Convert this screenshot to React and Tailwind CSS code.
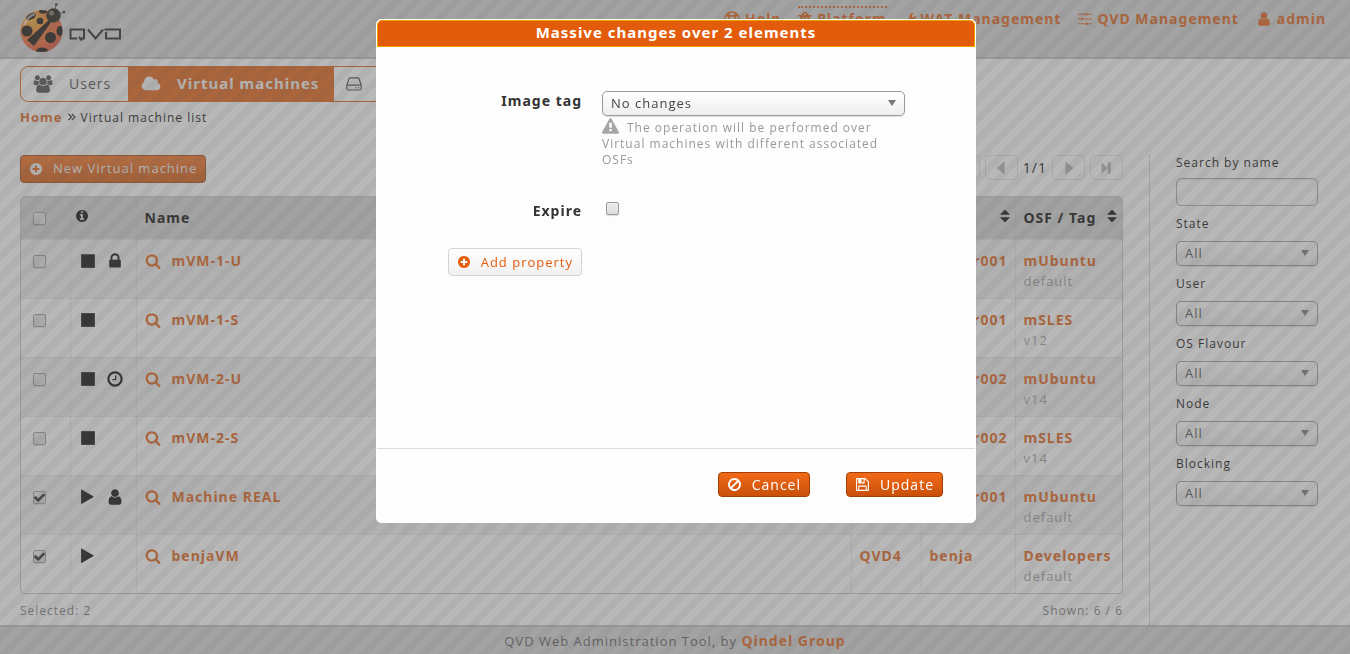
import { FaWrench, FaRegLifeRing } from "react-icons/fa";

const CIRCLE =
  "M1664 896q0 209-103 385.5t-279.5 279.5-385.5 103-385.5-103-279.5-279.5-103-385.5 103-385.5 279.5-279.5 385.5-103 385.5 103 279.5 279.5 103 385.5z";

const PATHS = {
  search:
    "M1216 832q0-185-131.5-316.5t-316.5-131.5-316.5 131.5-131.5 316.5 131.5 316.5 316.5 131.5 316.5-131.5 131.5-316.5zm512 832q0 52-38 90t-90 38q-54 0-90-38l-343-342q-179 124-399 124-143 0-273.5-55.5t-225-150-150-225-55.5-273.5 55.5-273.5 150-225 225-150 273.5-55.5 273.5 55.5 225 150 150 225 55.5 273.5q0 220-124 399l343 343q37 37 37 90z",
  user: "M1536 1399q0 109-62.5 187t-150.5 78h-854q-88 0-150.5-78t-62.5-187q0-85 8.5-160.5t31.5-152 58.5-131 94-89 134.5-34.5q131 128 313 128t313-128q76 0 134.5 34.5t94 89 58.5 131 31.5 152 8.5 160.5zm-256-887q0 159-112.5 271.5t-271.5 112.5-271.5-112.5-112.5-271.5 112.5-271.5 271.5-112.5 271.5 112.5 112.5 271.5z",
  plus:
    "M1344 960v-128q0-26-19-45t-45-19h-256v-256q0-26-19-45t-45-19h-128q-26 0-45 19t-19 45v256h-256q-26 0-45 19t-19 45v128q0 26 19 45t45 19h256v256q0 26 19 45t45 19h128q26 0 45-19t19-45v-256h256q26 0 45-19t19-45z" + CIRCLE,
  floppy:
    "M512 1536h768v-384h-768v384zm896 0h128v-896q0-14-10-38.5t-20-34.5l-281-281q-10-10-34-20t-39-10v416q0 40-28 68t-68 28h-576q-40 0-68-28t-28-68v-416h-128v1280h128v-416q0-40 28-68t68-28h832q40 0 68 28t28 68v416zm-384-928v-320q0-13-9.5-22.5t-22.5-9.5h-192q-13 0-22.5 9.5t-9.5 22.5v320q0 13 9.5 22.5t22.5 9.5h192q13 0 22.5-9.5t9.5-22.5zm640 32v928q0 40-28 68t-68 28h-1344q-40 0-68-28t-28-68v-1344q0-40 28-68t68-28h928q40 0 88 20t76 48l280 280q28 28 48 76t20 88z",
  ban: "M1440 893q0-161-87-295l-754 753q137 89 297 89 111 0 211.5-43.5t173.5-116.5 116-174.5 43-212.5zm-999 299l755-754q-135-91-300-91-148 0-273 73t-198 199-73 274q0 162 89 299zm1223-299q0 157-61 300t-163.5 246-245 164-298.5 61-298.5-61-245-164-163.5-246-61-300 61-299.5 163.5-245.5 245-164 298.5-61 298.5 61 245 164 163.5 245.5 61 299.5z",
  clock:
    "M1024 544v448q0 14-9 23t-23 9h-320q-14 0-23-9t-9-23v-64q0-14 9-23t23-9h224v-352q0-14 9-23t23-9h64q14 0 23 9t9 23zm416 352q0-148-73-273t-198-198-273-73-273 73-198 198-73 273 73 273 198 198 273 73 273-73 198-198 73-273z" + CIRCLE,
  lock: "M640 768h512v-192q0-106-75-181t-181-75-181 75-75 181v192zm832 96v576q0 40-28 68t-68 28h-960q-40 0-68-28t-28-68v-576q0-40 28-68t68-28h32v-192q0-184 132-316t316-132 316 132 132 316v192h32q40 0 68 28t28 68z",
  info: "M1152 1376v-160q0-14-9-23t-23-9h-96v-512q0-14-9-23t-23-9h-320q-14 0-23 9t-9 23v160q0 14 9 23t23 9h96v320h-96q-14 0-23 9t-9 23v160q0 14 9 23t23 9h448q14 0 23-9t9-23zm-128-896v-160q0-14-9-23t-23-9h-192q-14 0-23 9t-9 23v160q0 14 9 23t23 9h192q14 0 23-9t9-23z" + CIRCLE,
  sort: "M1408 1088q0 26-19 45l-448 448q-19 19-45 19t-45-19l-448-448q-19-19-19-45t19-45 45-19h896q26 0 45 19t19 45zm0-384q0 26-19 45t-45 19h-896q-26 0-45-19t-19-45 19-45l448-448q19-19 45-19t45 19l448 448q19 19 19 45z",
  warning:
    "M1024 1375v-190q0-14-9.5-23.5t-22.5-9.5h-192q-13 0-22.5 9.5t-9.5 23.5v190q0 14 9.5 23.5t22.5 9.5h192q13 0 22.5-9.5t9.5-23.5zm-2-374l18-459q0-12-10-19-13-11-24-11h-220q-11 0-24 11-10 7-10 21l17 457q0 10 10 16.5t24 6.5h185q14 0 23.5-6.5t10.5-16.5zm-14-934l768 1408q35 63-2 126-17 29-46.5 46t-63.5 17h-1536q-34 0-63.5-17t-46.5-46q-37-63-2-126l768-1408q17-31 47-49t65-18 65 18 47 49z",
  play: "M128 32l1400 800q30 32 0 64l-1400 800z",
  stop: "M128 128h1536v1536h-1536z",
  prev: "M1300 128v1536l-900-768z",
  next: "M492 128v1536l900-768z",
  last: "M300 256v1280l680-640zM980 256h340v1280h-340z",
  sliders:
    "M0 224h900v128h-900zM1250 224h542v128h-542zM950 120h256v336h-256zM0 832h350v128h-350zM700 832h1092v128h-1092zM400 728h256v336h-256zM0 1440h1000v128h-1000zM1350 1440h442v128h-442zM1050 1336h256v336h-256z",
  check: "M1671 566q0 40-28 68l-860 860q-28 28-68 28t-68-28l-498-498q-28-28-28-68t28-68l136-136q28-28 68-28t68 28l294 295 656-657q28-28 68-28t68 28l136 136q28 28 28 68z",
  angles: "M250 350l550 550-550 550M850 350l550 550-550 550",
};

function Icon({ name, className }) {
  return (
    <svg viewBox="0 0 1792 1792" className={className} fill="currentColor" fillRule="evenodd" aria-hidden="true">
      <path d={PATHS[name]} />
    </svg>
  );
}

function AnglesIcon({ className }) {
  return (
    <svg viewBox="0 0 1792 1792" className={className} fill="none" stroke="currentColor" strokeWidth="200" aria-hidden="true">
      <path d={PATHS.angles} />
    </svg>
  );
}

function UsersIcon({ className }) {
  return (
    <svg viewBox="0 0 2048 1792" className={className} fill="currentColor" aria-hidden="true">
      <path d="M657 896q-162 5-265 128h-134q-82 0-138-40.5t-56-118.5q0-353 124-353 6 0 43.5 21t97.5 42.5 119 21.5q67 0 133-23-5 37-5 66 0 159 90 293zm1071 637q0 120-73 189.5t-194 69.5h-874q-121 0-194-69.5t-73-189.5q0-53 3.500-103.500t14-109 26.500-108.500 43-97.500 62-81 85.500-53.500 111.500-20q10 0 43 21.500t73 48 107 48 135 21.500 135-21.500 107-48 73-48 43-21.500q61 0 111.500 20t85.500 53.500 62 81 43 97.500 26.500 108.500 14 109 3.500 103.500zm-1024-1277q0 106-75 181t-181 75-181-75-75-181 75-181 181-75 181 75 75 181zm704 384q0 159-112.500 271.500t-271.500 112.500-271.500-112.500-112.500-271.500 112.500-271.500 271.500-112.500 271.500 112.500 112.500 271.500zm576 225q0 78-56 118.500t-138 40.500h-134q-103-123-265-128 90-134 90-293 0-29-5-66 66 23 133 23 59 0 119-21.500t97.500-42.500 43.500-21q124 0 124 353zm-128-609q0 106-75 181t-181 75-181-75-75-181 75-181 181-75 181 75 75 181z" />
    </svg>
  );
}

function CloudIcon({ className }) {
  return (
    <svg viewBox="0 0 2048 1792" className={className} fill="currentColor" aria-hidden="true">
      <path d="M1984 1152q0 159-112.5 271.5t-271.5 112.5h-1088q-185 0-316.5-131.5t-131.5-316.5q0-132 71-241.5t187-163.5q-2-28-2-43 0-212 150-362t362-150q158 0 286.5 88t187.5 230q70-62 166-62 106 0 181 75t75 181q0 75-41 138 129 30 213 134.5t84 239.5z" />
    </svg>
  );
}

function HddIcon({ className }) {
  return (
    <svg viewBox="0 0 16 14" className={className} fill="none" stroke="currentColor" strokeWidth="1.2" aria-hidden="true">
      <path d="M.8 8.2 3 1.6Q3.3.8 4 .8h8q.7 0 1 .8l2.2 6.6v3.6q0 1.2-1.2 1.2H2q-1.200 0-1.200-1.200zM.8 8.200h14.400" />
      <path d="M9.500 10.700h1.200M12 10.700h1.200" strokeWidth="1.500" />
    </svg>
  );
}

function PlatformIcon({ className }) {
  return (
    <svg viewBox="0 0 14 14" className={className} fill="currentColor" fillRule="evenodd" aria-hidden="true">
      <path d="M5 0h4v1.500h1.500V3H14v1.500h-2.200L11 14H3L2.200 4.500H0V3h3.500V1.500H5zM6 1.500h2V3H6zM4.500 5.500l.5 7h1v-7zM8 5.500v7h1l.5-7z" />
    </svg>
  );
}

function Logo() {
  return (
    <svg viewBox="0 0 104 54" className="h-[54px] w-[104px]" role="img" aria-label="QVD">
      <defs>
        <radialGradient id="shell" cx="0.3" cy="0.25" r="0.9">
          <stop offset="0" stopColor="#f5b32a" />
          <stop offset="0.45" stopColor="#f0702a" />
          <stop offset="1" stopColor="#e0402c" />
        </radialGradient>
        <clipPath id="body">
          <circle cx="21.500" cy="31" r="21" />
        </clipPath>
      </defs>
      <circle cx="21.500" cy="31" r="21" fill="url(#shell)" />
      <g clipPath="url(#body)" fill="#120a06">
        <path d="m29 20-22 20 7 6 18-25z" />
        <circle cx="7" cy="31" r="5.500" />
        <circle cx="20" cy="21" r="3.300" />
        <ellipse cx="11" cy="16.500" rx="5.500" ry="3" transform="rotate(-30 11 16.500)" />
        <ellipse cx="23" cy="11.500" rx="4" ry="2" />
        <circle cx="30.500" cy="37.500" r="5.500" />
        <ellipse cx="40" cy="31" rx="3.500" ry="5" />
        <ellipse cx="22" cy="51" rx="6" ry="3.500" />
      </g>
      <path d="M4 25Q8 16 15 14" stroke="#fff" strokeOpacity=".55" strokeWidth="2.500" fill="none" />
      <circle cx="33.500" cy="15.500" r="7.200" fill="#1a120c" />
      <circle cx="31.500" cy="13" r="2.500" fill="#7a6a58" />
      <path d="m35 9 1.200-4.500M40 13.500l4-1.500" stroke="#1a120c" strokeWidth=".7" />
      <circle cx="36.300" cy="4.500" r="1.200" fill="#1a120c" />
      <circle cx="44" cy="12" r="1.200" fill="#1a120c" />
      <g fill="none" stroke="#1c1c1c" strokeWidth="2">
        <path d="M57 38.500h-6.500V29.500H64v9h-3M59 37l3 3.500" />
        <path d="m68 29.500 7.500 9 7.500-9" />
        <path d="M86 32v6.500h14v-9H84.500" />
      </g>
    </svg>
  );
}

function CheckBox({ label, defaultChecked, id }) {
  return (
    <span className="relative inline-flex size-[13px] align-middle">
      <input
        id={id}
        type="checkbox"
        aria-label={label}
        defaultChecked={defaultChecked}
        className="peer size-[13px] appearance-none rounded-xs border border-[#999] bg-linear-to-b from-[#ededed] to-[#dcdcdc] shadow-[0_1px_1px_rgba(0,0,0,0.12)]"
      />
      <Icon name="check" className="pointer-events-none absolute inset-0 hidden size-[13px] text-[#222] peer-checked:block" />
    </span>
  );
}

function SelectBox({ id, value }) {
  return (
    <div className="relative">
      <select
        id={id}
        className="h-[25px] w-full appearance-none rounded-[5px] border border-[#999] bg-linear-to-b from-white to-[#eee] pl-2 pr-6 text-[13px] text-[#444] shadow-[0_1px_1px_rgba(0,0,0,0.12)]"
      >
        <option>{value}</option>
      </select>
      <svg viewBox="0 0 8 6" className="pointer-events-none absolute right-[9px] top-[9px] h-[6px] w-2 fill-[#777]" aria-hidden="true">
        <path d="M0 0h8L4 6z" />
      </svg>
    </div>
  );
}

const NAV = [
  { label: "Help", icon: <FaRegLifeRing className="size-4" /> },
  { label: "Platform", icon: <PlatformIcon className="size-3.5" />, active: true },
  { label: "WAT Management", icon: <FaWrench className="size-3" /> },
  { label: "QVD Management", icon: <Icon name="sliders" className="size-3.5" /> },
  { label: "admin", icon: <Icon name="user" className="size-4" /> },
];

const ROWS = [
  { name: "mVM-1-U", state: "stop", extra: "lock", user: "mUser001", osf: "mUbuntu", tag: "default" },
  { name: "mVM-1-S", state: "stop", user: "mUser001", osf: "mSLES", tag: "v12" },
  { name: "mVM-2-U", state: "stop", extra: "clock", user: "mUser002", osf: "mUbuntu", tag: "v14" },
  { name: "mVM-2-S", state: "stop", user: "mUser002", osf: "mSLES", tag: "v14" },
  { name: "Machine REAL", state: "play", extra: "user", user: "mUser001", osf: "mUbuntu", tag: "default", checked: true },
  { name: "benjaVM", state: "play", node: "QVD4", user: "benja", osf: "Developers", tag: "default", checked: true },
];

const FILTERS = ["State", "User", "OS Flavour", "Node", "Blocking"];

const BOLD = "font-['Noto_Sans',sans-serif] font-bold";

function PageButton({ label, icon }) {
  return (
    <button aria-label={label} className="flex h-[25px] w-[33px] items-center justify-center rounded-[5px] border border-[#e0e0e0] text-[#b4b4b4]">
      <Icon name={icon} className="size-4" />
    </button>
  );
}

function Header() {
  return (
    <header className="flex h-[59px] items-start justify-between border-b-2 border-[#bdbdbd] bg-[#d4d4d4] pl-5 pr-6">
      <a href="#home" className="block">
        <Logo />
      </a>
      <nav className={"flex gap-[17px] pt-1.5 text-sm text-[#e25c0c] " + BOLD}>
        {NAV.map((item) => (
          <a
            key={item.label}
            href={"#" + item.label}
            className={
              "flex h-6 items-center gap-[5px] border-t-2 border-dotted whitespace-nowrap " +
              (item.active ? "border-[#e25c0c]" : "border-transparent")
            }
          >
            {item.icon}
            {item.label}
          </a>
        ))}
      </nav>
    </header>
  );
}

function Tabs() {
  return (
    <nav className="flex h-9 w-fit overflow-hidden rounded-lg border border-[#e25c0c] text-sm text-[#444]">
      <a href="#users" className="flex w-[107px] items-center gap-4 pl-3">
        <UsersIcon className="h-[18px] w-5" />
        Users
      </a>
      <a href="#vms" className={"flex w-[206px] items-center gap-4 bg-[#e25c0c] pl-[13px] text-[15px] text-[#f4f4f4] " + BOLD}>
        <CloudIcon className="h-[18px] w-5" />
        Virtual machines
      </a>
      <a href="#nodes" className="flex items-center gap-4 px-3">
        <HddIcon className="h-3.5 w-4" />
        Nodes
      </a>
    </nav>
  );
}

function MachineTable() {
  const head = "border-l border-dotted border-[#c4c4c4] ";
  const cell = "border-l border-dotted border-[#d4d4d4] align-top ";
  const link = cell + "px-2 pt-[11px] text-[#e25c0c] " + BOLD;
  return (
    <div className="overflow-hidden rounded-[5px] border border-[#c4c4c4]">
      <table className="w-full table-fixed border-collapse text-left text-sm">
        <colgroup>
          <col className="w-[49px]" />
          <col className="w-[66px]" />
          <col />
          <col className="w-[70px]" />
          <col className="w-[94px]" />
          <col className="w-[107px]" />
        </colgroup>
        <thead className={BOLD}>
          <tr className="h-[42px] bg-[#d2d2d2]">
            <th className="pl-3">
              <CheckBox label="Select all" />
            </th>
            <th className={head + "pl-1"}>
              <Icon name="info" className="mb-1 size-3.5" />
            </th>
            <th className={head + "px-2"}>Name</th>
            <th className={head + "px-2"}>Node</th>
            <th className={head + "pl-2 pr-0.5"}>
              <span className="flex items-center justify-between">
                User
                <Icon name="sort" className="mb-1 size-4" />
              </span>
            </th>
            <th className={head + "pl-2 pr-0.5 whitespace-nowrap"}>
              <span className="flex items-center justify-between">
                OSF / Tag
                <Icon name="sort" className="mb-1 size-4" />
              </span>
            </th>
          </tr>
        </thead>
        <tbody>
          {ROWS.map((row) => (
            <tr key={row.name} className="h-[59px] border-t border-dotted border-[#d4d4d4] odd:bg-[#f0f0f0]">
              <td className="pl-3 pt-[11px] align-top">
                <CheckBox label={"Select " + row.name} defaultChecked={row.checked} />
              </td>
              <td className={cell + "pl-[9px] pt-3"}>
                <span className="flex h-[18px] items-center gap-2.5">
                  <Icon name={row.state} className="size-4" />
                  {row.extra && <Icon name={row.extra} className="size-[18px]" />}
                </span>
              </td>
              <td className={link}>
                <span className="flex items-center gap-[11px]">
                  <Icon name="search" className="size-4" />
                  <a href={"#" + row.name}>{row.name}</a>
                </span>
              </td>
              <td className={link}>{row.node && <a href={"#" + row.node}>{row.node}</a>}</td>
              <td className={link}>
                <a href={"#" + row.user}>{row.user}</a>
              </td>
              <td className={link}>
                <a href={"#" + row.osf} className="block">
                  {row.osf}
                </a>
                <span className="block font-['Open_Sans',sans-serif] text-[13px] leading-5 font-normal text-[#999]">{row.tag}</span>
              </td>
            </tr>
          ))}
        </tbody>
      </table>
    </div>
  );
}

function Filters() {
  return (
    <aside className="w-[201px] shrink-0 border-l border-dotted border-[#b0b0b0] pl-[26px] pr-8 text-xs">
      <label htmlFor="search-name" className="block h-[23px] leading-[15px]">
        Search by name
      </label>
      <input id="search-name" type="text" className="mb-[9px] h-7 w-full rounded-[5px] border border-[#aaa] px-2 shadow-[inset_0_1px_2px_rgba(0,0,0,0.12)]" />
      {FILTERS.map((label) => (
        <div key={label} className="mb-[9px]">
          <label htmlFor={"filter-" + label} className="block h-[26px] leading-[17px]">
            {label}
          </label>
          <SelectBox id={"filter-" + label} value="All" />
        </div>
      ))}
    </aside>
  );
}

function Dialog() {
  const action = "flex h-[25px] items-center gap-2.5 rounded-sm border border-[#a33f05] bg-linear-to-b from-[#f26a18] to-[#c9500a] px-2 text-sm text-white";
  return (
    <div className="fixed inset-0 flex items-start justify-center bg-[rgba(111,111,111,0.485)] bg-[linear-gradient(135deg,transparent_25%,rgba(80,80,80,0.08)_25%_50%,transparent_50%_75%,rgba(80,80,80,0.08)_75%)] bg-size-[20px_20px] bg-position-[3px_0px] pt-[19px]">
      <section role="dialog" aria-modal="true" aria-labelledby="dialog-title" className="ml-0.5 flex min-h-[504px] w-[600px] flex-col rounded-[5px] border border-white bg-[#fdfdfd]">
        <h2 id="dialog-title" className={"h-[27px] rounded-t-[5px] border border-[#f0a000] bg-[#e25c0c] text-center text-[15px] leading-[22px] text-white " + BOLD}>
          Massive changes over 2 elements
        </h2>
        <form className="flex-1 pt-11 text-sm">
          <div className="flex h-[106px] gap-5">
            <label htmlFor="image-tag" className={"w-[205px] pt-px text-right leading-[18px] text-[#333] " + BOLD}>
              Image tag
            </label>
            <div className="w-[303px]">
              <SelectBox id="image-tag" value="No changes" />
              <p className="pt-0.5 pr-4 text-xs leading-4 text-[#999]">
                <Icon name="warning" className="mr-2 inline size-[17px] align-[-3px] text-[#a6a6a6]" />
                The operation will be performed over Virtual machines with different associated OSFs
              </p>
            </div>
          </div>
          <div className="flex h-[51px] gap-6">
            <label htmlFor="expire" className={"w-[205px] pt-[5px] text-right leading-[18px] text-[#333] " + BOLD}>
              Expire
            </label>
            <div>
              <CheckBox id="expire" label="Expire" />
            </div>
          </div>
          <div className="flex w-[205px] justify-end">
            <button type="button" className="flex h-7 items-center gap-2.5 rounded-sm border border-[#d4d4d4] bg-linear-to-b from-white to-[#f0f0f0] px-2 text-[13px] whitespace-nowrap text-[#e25c0c]">
              <Icon name="plus" className="size-3.5" />
              Add property
            </button>
          </div>
        </form>
        <footer className="flex h-[74px] justify-end gap-9 border-t border-[#ddd] pt-[23px] pr-8">
          <button className={action}>
            <Icon name="ban" className="size-[15px]" />
            Cancel
          </button>
          <button className={action}>
            <Icon name="floppy" className="size-[15px]" />
            Update
          </button>
        </footer>
      </section>
    </div>
  );
}

export default function App() {
  return (
    <div className="flex min-h-screen flex-col bg-[#fdfdfd] font-['Open_Sans',sans-serif] tracking-[1px] text-black">
      <Header />
      <div className="flex flex-1 flex-col pl-5">
        <div className="pt-[7px]">
          <Tabs />
        </div>
        <p className="flex h-[53px] items-start gap-1 pt-[5px] text-xs leading-[22px]">
          <a href="#home" className={"text-[13px] leading-5 text-[#e25c0c] " + BOLD}>
            Home
          </a>
          <AnglesIcon className="mt-[5px] size-2.5" />
          <span>Virtual machine list</span>
        </p>
        <div className="flex flex-1">
          <main className="mr-[26px] min-w-0 flex-1">
            <div className="flex h-[41px] items-start justify-between">
              <button className="flex h-7 items-center gap-2.5 rounded-sm border border-[#a33f05] bg-linear-to-b from-[#f26a18] to-[#d05408] px-2 text-[13px] text-[#f0f0f0]">
                <Icon name="plus" className="size-3.5" />
                New Virtual machine
              </button>
              <div className="flex items-center gap-[5px] text-sm">
                <PageButton label="First page" icon="prev" />
                <PageButton label="Previous page" icon="prev" />
                <span>1/1</span>
                <PageButton label="Next page" icon="next" />
                <PageButton label="Last page" icon="last" />
              </div>
            </div>
            <MachineTable />
            <div className="flex justify-between pt-1.5 text-xs leading-[22px] text-[#777]">
              <span>Selected: 2</span>
              <span>Shown: 6 / 6</span>
            </div>
          </main>
          <Filters />
        </div>
      </div>
      <footer className="h-[29px] border-t-2 border-[#bdbdbd] bg-[#d4d4d4] text-center text-[13px] leading-7 text-[#555]">
        QVD Web Administration Tool, by{" "}
        <a href="#qindel" className={"text-sm leading-7 text-[#e25c0c] " + BOLD}>
          Qindel Group
        </a>
      </footer>
      <Dialog />
    </div>
  );
}
